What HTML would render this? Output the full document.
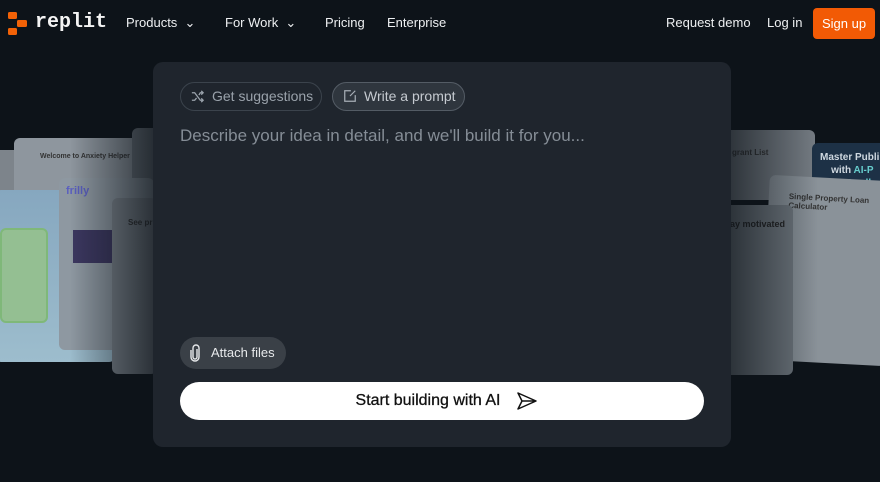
<!DOCTYPE html>
<html><head><style>
*{margin:0;padding:0;box-sizing:border-box}
body{width:880px;height:482px;background:#0d1319;font-family:"Liberation Sans",sans-serif;overflow:hidden;position:relative;color:#f0f1f2}
.nav{position:absolute;top:0;left:0;width:880px;height:46px}
.nav span{position:absolute;top:15px;font-size:13px;color:#eef0f2}
.card{position:absolute;border-radius:6px}
.panel{position:absolute;left:153px;top:62px;width:578px;height:385px;background:#1f252d;border-radius:10px}
.pill{position:absolute;height:29px;border-radius:15px;font-size:14px;line-height:27px;color:#9aa2ab;border:1px solid #3b434c}
</style></head><body>
<div class="nav">
<svg style="position:absolute;left:8px;top:12px" width="22" height="24" viewBox="0 0 22 24"><rect x="0" y="0" width="9" height="7" rx="1.5" fill="#f26207"/><rect x="9" y="8" width="10" height="7" rx="1.5" fill="#f26207"/><rect x="0" y="16" width="9" height="7" rx="1.5" fill="#f26207"/><rect x="0" y="5" width="9" height="13" fill="#f26207" opacity="0"/></svg>
<span style="left:35px;top:11px;font-family:'Liberation Mono',monospace;font-weight:bold;font-size:20px;color:#f4f4f4">replit</span>
<span style="left:126px">Products&nbsp;&nbsp;⌄</span>
<span style="left:225px">For Work&nbsp;&nbsp;⌄</span>
<span style="left:325px">Pricing</span>
<span style="left:387px">Enterprise</span>
<span style="left:666px">Request demo</span>
<span style="left:767px">Log in</span>
<div style="position:absolute;left:813px;top:8px;width:62px;height:31px;background:#f25a05;border-radius:4px;color:#fff;font-size:13px;text-align:center;line-height:31px">Sign up</div>
</div>

<div class="card" style="left:-10px;top:150px;width:40px;height:45px;background:#7d848b"></div>
<div class="card" style="left:14px;top:138px;width:130px;height:66px;background:#8e969e"><div style="font-size:7px;color:#333;font-weight:bold;margin:15px 0 0 26px">Welcome to Anxiety Helper</div></div>
<div class="card" style="left:132px;top:128px;width:30px;height:60px;background:#6f777f"></div>
<div class="card" style="left:-5px;top:190px;width:120px;height:172px;background:linear-gradient(180deg,#86a7bf,#9dbdcd)"></div>
<div class="card" style="left:0;top:228px;width:48px;height:95px;background:#94bf92;border:2px solid #7fb879"></div>
<div class="card" style="left:59px;top:178px;width:95px;height:172px;background:#8e98a1"><div style="font-weight:bold;color:#5a5fc0;font-size:11px;margin:7px 0 0 7px">frilly</div><div style="position:absolute;left:14px;top:52px;width:40px;height:33px;background:#3c3760"></div></div>
<div class="card" style="left:112px;top:198px;width:45px;height:176px;background:#7e868e"><div style="font-size:8px;color:#333;font-weight:bold;margin:20px 0 0 16px">See pr</div></div>
<div style="position:absolute;left:70px;top:120px;width:85px;height:260px;background:linear-gradient(90deg,rgba(13,19,25,0),rgba(13,19,25,.75))"></div>

<div class="card" style="left:720px;top:130px;width:95px;height:70px;background:#767d84"><div style="font-size:8px;color:#333;font-weight:bold;margin:18px 0 0 12px">grant List</div></div>
<div class="card" style="left:812px;top:143px;width:80px;height:58px;background:#1d3146"><div style="font-size:10px;font-weight:bold;color:#cfd8e0;margin:8px 0 0 8px;line-height:13px">Master Publi<br>&nbsp;&nbsp;&nbsp;&nbsp;with <span style="color:#6cc">AI-P</span><br>&nbsp;&nbsp;&nbsp;&nbsp;&nbsp;&nbsp;&nbsp;&nbsp;&nbsp;<span style="color:#6cc">Feedb</span></div></div>
<div class="card" style="left:765px;top:178px;width:125px;height:185px;background:#8a9299;transform:rotate(3deg)"><div style="font-size:8px;color:#333;font-weight:bold;margin:16px 0 0 20px">Single Property Loan<br>Calculator</div></div>
<div class="card" style="left:715px;top:205px;width:78px;height:170px;background:#70787f"><div style="font-size:9px;color:#222;font-weight:bold;margin:14px 0 0 12px">tay motivated</div></div>
<div style="position:absolute;left:728px;top:120px;width:90px;height:260px;background:linear-gradient(270deg,rgba(13,19,25,0),rgba(13,19,25,.7))"></div>

<div class="panel"></div>
<div class="pill" style="left:180px;top:82px;width:142px;padding-left:31px">Get suggestions</div>
<svg style="position:absolute;left:190px;top:89px" width="15" height="15" viewBox="0 0 16 16" fill="none" stroke="#9aa2ab" stroke-width="1.4"><path d="M2 4h3l6 8h3M2 12h3l2-2.5M9.5 6.5L11 4h3M12 2l2 2-2 2M12 10l2 2-2 2"/></svg>
<div class="pill" style="left:332px;top:82px;width:133px;padding-left:31px;background:#2f363e;border-color:#545c65;color:#c5cad0">Write a prompt</div>
<svg style="position:absolute;left:343px;top:89px" width="14" height="14" viewBox="0 0 16 16" fill="none" stroke="#a7aeb6" stroke-width="1.4"><path d="M9 2H2v12h12V7M8 8l6-6"/></svg>
<div style="position:absolute;left:180px;top:126px;font-size:17px;color:#858d96">Describe your idea in detail, and we'll build it for you...</div>
<div style="position:absolute;left:180px;top:337px;width:106px;height:32px;border-radius:16px;background:#3a4047;font-size:13px;color:#e7e9eb;line-height:32px;padding-left:31px">Attach files</div>
<svg style="position:absolute;left:188px;top:344px" width="14" height="18" viewBox="0 0 14 18" fill="none" stroke="#e7e9eb" stroke-width="1.4"><path d="M9 5v8a2 2 0 0 1-4 0V4a3 3 0 0 1 6 0v9a4 4 0 0 1-8 0V6"/></svg>
<div style="position:absolute;left:180px;top:382px;width:524px;height:38px;border-radius:19px;background:#fff;color:#111;font-size:16px;line-height:38px;text-align:center;padding-right:28px;-webkit-text-stroke:0.3px #111">Start building with AI</div>
<svg style="position:absolute;left:517px;top:392px" width="20" height="18" viewBox="0 0 20 18" fill="none" stroke="#111" stroke-width="1.5" stroke-linejoin="round"><path d="M1 1l18 8-18 8 4-8z M5 9h14"/></svg>
</body></html>
